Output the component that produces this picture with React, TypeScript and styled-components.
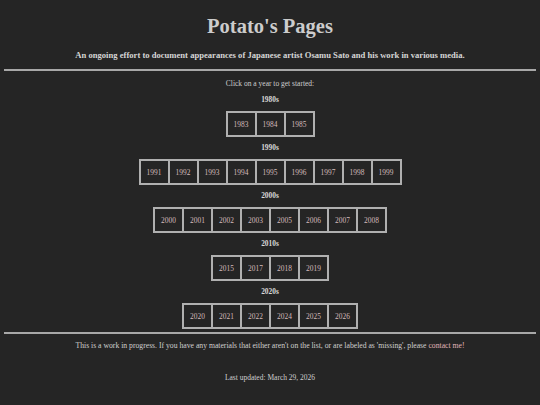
import React from "react";
import styled, { createGlobalStyle } from "styled-components";

const GlobalStyle = createGlobalStyle`
  html, body {
    margin: 0;
    padding: 0;
    background: #252525;
  }
  body {
    font-family: "Liberation Serif", "Times New Roman", serif;
    color: #d0d0d0;
  }
`;

const Page = styled.main`
  width: 540px;
  height: 405px;
  padding: 0 4px;
  box-sizing: border-box;
  text-align: center;
`;

const Title = styled.h1`
  margin: 0;
  padding-top: 13px;
  font-size: 20.5px;
  line-height: 26px;
  font-weight: bold;
  color: #cccccc;
`;

const Tagline = styled.h3`
  margin: 10px 0 0;
  font-size: 8.6px;
  line-height: 12px;
  font-weight: bold;
  color: #d6d6d6;
`;

const Rule = styled.hr<{ $gap: number }>`
  margin: ${(p) => p.$gap}px 0 0;
  border: none;
  border-top: 2px solid #a8a8a8;
  height: 0;
`;

const Small = styled.p<{ $top: number; $size?: number }>`
  margin: ${(p) => p.$top}px 0 0;
  font-size: ${(p) => p.$size ?? 7.5}px;
  line-height: 10px;
  color: #cfcfcf;
`;

const Decade = styled.h4`
  margin: 6px 0 0;
  font-size: 7.4px;
  line-height: 10px;
  font-weight: bold;
  color: #d8d8d8;
`;

const YearTable = styled.div`
  display: inline-flex;
  margin-top: 6px;
  border: 1px solid #b0b0b0;
`;

const YearCell = styled.a`
  display: flex;
  align-items: center;
  justify-content: center;
  width: 27px;
  height: 22px;
  box-sizing: content-box;
  border: 1px solid #b0b0b0;
  font-size: 7.4px;
  color: #d4bcbc;
  text-decoration: none;
  cursor: pointer;
`;

const Contact = styled.a`
  color: #e0b4b8;
  text-decoration: none;
`;

const decades: [string, string[]][] = [
  ["1980s", ["1983", "1984", "1985"]],
  ["1990s", ["1991", "1992", "1993", "1994", "1995", "1996", "1997", "1998", "1999"]],
  ["2000s", ["2000", "2001", "2002", "2003", "2005", "2006", "2007", "2008"]],
  ["2010s", ["2015", "2017", "2018", "2019"]],
  ["2020s", ["2020", "2021", "2022", "2024", "2025", "2026"]],
];

export default function App() {
  return (
    <>
      <GlobalStyle />
      <Page>
        <Title>Potato's Pages</Title>
        <Tagline>
          An ongoing effort to document appearances of Japanese artist Osamu Sato and his work in various media.
        </Tagline>
        <Rule $gap={8} />
        <Small $top={8}>Click on a year to get started:</Small>
        {decades.map(([label, years]) => (
          <div key={label}>
            <Decade>{label}</Decade>
            <YearTable>
              {years.map((y) => (
                <YearCell key={y}>{y}</YearCell>
              ))}
            </YearTable>
          </div>
        ))}
        <Rule $gap={3} />
        <Small $top={7} $size={7.7}>
          This is a work in progress. If you have any materials that either aren't on the list, or are labeled as
          'missing', please <Contact>contact me!</Contact>
        </Small>
        <Small $top={22}>Last updated: March 29, 2026</Small>
      </Page>
    </>
  );
}
